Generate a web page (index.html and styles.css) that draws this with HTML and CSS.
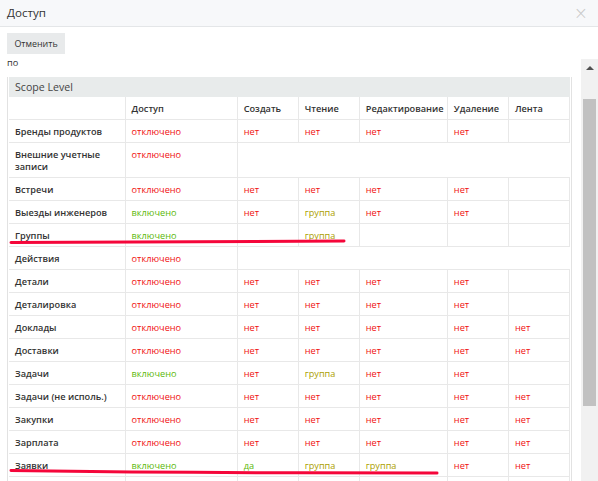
FILE: index.html
```html
<!DOCTYPE html>
<html lang="ru">
<head>
<meta charset="utf-8">
<title>Доступ</title>
<link rel="stylesheet" href="styles.css">
</head>
<body>
<div class="modal">
  <div class="modal-header">
    <span class="modal-title">Доступ</span>
    <span class="close">×</span>
  </div>
  <div class="actions"><button class="btn">Отменить</button></div>
  <div class="scroll-area">
    <div class="scroll-content">
      <div class="note">по</div>
      <div class="panel">
        <div class="panel-heading">Scope Level</div>
        <table class="grid">
          <colgroup>
            <col class="c-name"><col class="c-access"><col class="c-sm"><col class="c-sm"><col class="c-edit"><col class="c-sm"><col class="c-last">
          </colgroup>
          <thead>
            <tr><th></th><th>Доступ</th><th>Создать</th><th>Чтение</th><th>Редактирование</th><th>Удаление</th><th>Лента</th></tr>
          </thead>
          <tbody>
            <tr><td class="name">Бренды продуктов</td><td class="off">отключено</td><td class="no">нет</td><td class="no">нет</td><td class="no">нет</td><td class="no">нет</td><td></td></tr>
            <tr><td class="name">Внешние учетные записи</td><td class="off">отключено</td></tr>
            <tr><td class="name">Встречи</td><td class="off">отключено</td><td class="no">нет</td><td class="no">нет</td><td class="no">нет</td><td class="no">нет</td><td></td></tr>
            <tr><td class="name">Выезды инженеров</td><td class="on">включено</td><td class="no">нет</td><td class="grp">группа</td><td class="no">нет</td><td class="no">нет</td><td></td></tr>
            <tr><td class="name">Группы</td><td class="on">включено</td><td></td><td class="grp">группа</td><td></td><td></td><td></td></tr>
            <tr><td class="name">Действия</td><td class="off">отключено</td></tr>
            <tr><td class="name">Детали</td><td class="off">отключено</td><td class="no">нет</td><td class="no">нет</td><td class="no">нет</td><td class="no">нет</td><td></td></tr>
            <tr><td class="name">Деталировка</td><td class="off">отключено</td><td class="no">нет</td><td class="no">нет</td><td class="no">нет</td><td class="no">нет</td><td></td></tr>
            <tr><td class="name">Доклады</td><td class="off">отключено</td><td class="no">нет</td><td class="no">нет</td><td class="no">нет</td><td class="no">нет</td><td class="no">нет</td></tr>
            <tr><td class="name">Доставки</td><td class="off">отключено</td><td class="no">нет</td><td class="no">нет</td><td class="no">нет</td><td class="no">нет</td><td class="no">нет</td></tr>
            <tr><td class="name">Задачи</td><td class="on">включено</td><td class="no">нет</td><td class="grp">группа</td><td class="no">нет</td><td class="no">нет</td><td></td></tr>
            <tr><td class="name">Задачи (не исполь.)</td><td class="off">отключено</td><td class="no">нет</td><td class="no">нет</td><td class="no">нет</td><td class="no">нет</td><td class="no">нет</td></tr>
            <tr><td class="name">Закупки</td><td class="off">отключено</td><td class="no">нет</td><td class="no">нет</td><td class="no">нет</td><td class="no">нет</td><td class="no">нет</td></tr>
            <tr><td class="name">Зарплата</td><td class="off">отключено</td><td class="no">нет</td><td class="no">нет</td><td class="no">нет</td><td class="no">нет</td><td class="no">нет</td></tr>
            <tr><td class="name">Заявки</td><td class="on">включено</td><td class="on">да</td><td class="grp">группа</td><td class="grp">группа</td><td class="no">нет</td><td class="no">нет</td></tr>
            <tr><td class="name">&nbsp;</td><td></td><td></td><td></td><td></td><td></td><td></td></tr>
          </tbody>
        </table>
      </div>
    </div>
    <div class="scrollbar">
      <div class="sb-btn"><span class="sb-arrow"></span></div>
      <div class="sb-track"><div class="sb-thumb"></div></div>
    </div>
  </div>
  <svg class="marks" width="598" height="481" viewBox="0 0 598 481">
    <path d="M11 242.5 Q180 241.5 344 241" />
    <path d="M11 470.5 Q150 472.5 300 472.8 L437 473" />
  </svg>
</div>
</body>
</html>
```

FILE: styles.css
```css
html, body {
  margin: 0;
  padding: 0;
  background: #fff;
}
body {
  font-family: "Open Sans", "Liberation Sans", sans-serif;
  color: #333;
}
.modal {
  position: relative;
  width: 598px;
  height: 481px;
  display: flex;
  flex-direction: column;
  overflow: hidden;
  background: #fff;
}
.modal-header {
  height: 26px;
  flex: 0 0 26px;
  background: #f7f8fa;
  border-bottom: 1px solid #e4e6e8;
  display: flex;
  align-items: center;
  justify-content: space-between;
  padding: 0 7px 0 7px;
}
.modal-title {
  font-size: 11.6px;
  color: #333;
  line-height: 18px;
}
.close {
  font-size: 17px;
  color: #c8c8c8;
  line-height: 18px;
  font-family: "DejaVu Sans", sans-serif;
  font-weight: 300;
  margin-right: 3px;
}
.actions {
  padding: 6px 7px 0 7px;
  flex: 0 0 auto;
}
.btn {
  display: block;
  height: 21px;
  width: 58px;
  border: none;
  background: #e8eaeb;
  color: #333;
  font-family: "Open Sans", "Liberation Sans", sans-serif;
  font-size: 8.9px;
  padding: 0;
  margin: 0;
}
.scroll-area {
  flex: 1 1 auto;
  min-height: 0;
  display: flex;
  margin-top: 2px;
}
.scroll-content {
  flex: 1 1 auto;
  overflow: hidden;
  padding: 0 9px 0 7px;
}
.note {
  font-size: 9.2px;
  line-height: 12px;
  padding-top: 1px;
  color: #333;
}
.panel {
  margin-top: 8px;
  border: 1px solid #e2e2e2;
  border-top: none;
  padding: 0 1px;
}
.panel-heading {
  height: 20px;
  background: #e8ebeb;
  font-size: 10.6px;
  line-height: 20px;
  padding-left: 6px;
  color: #444;
}
.grid {
  width: 561px;
  border-collapse: collapse;
  table-layout: fixed;
  font-size: 9.2px;
  line-height: 12px;
}
.c-name { width: 116px; }
.c-access { width: 112px; }
.c-sm { width: 61px; }
.c-edit { width: 88px; }
.c-last { width: 61px; }
.grid th, .grid td {
  border: 1px solid #e8e8e8;
  padding: 6px 6px 4px 6px;
  text-align: left;
  vertical-align: top;
  white-space: normal;
}
.grid thead th {
  border-top: none;
  font-weight: 600;
  color: #333;
}
.grid tr > :first-child { border-left: none; }
.grid td.name {
  font-weight: 600;
  color: #333;
}
.off, .no { color: #f01010; }
.on { color: #5cb80a; }
.grp { color: #aca000; }
.scrollbar {
  flex: 0 0 17px;
  width: 17px;
  background: #f1f1f1;
  margin-top: 3px;
  display: flex;
  flex-direction: column;
}
.sb-btn {
  height: 17px;
  display: flex;
  align-items: center;
  justify-content: center;
}
.sb-arrow {
  width: 0;
  height: 0;
  border-left: 4px solid transparent;
  border-right: 4px solid transparent;
  border-bottom: 4px solid #505050;
}
.sb-track {
  flex: 1;
  padding: 23px 2px 0 2px;
}
.sb-thumb {
  height: 307px;
  background: #c1c1c1;
}
.marks {
  position: absolute;
  left: 0;
  top: 0;
  pointer-events: none;
}
.marks path {
  fill: none;
  stroke: #f5063a;
  stroke-width: 3;
  stroke-linecap: round;
}
```
